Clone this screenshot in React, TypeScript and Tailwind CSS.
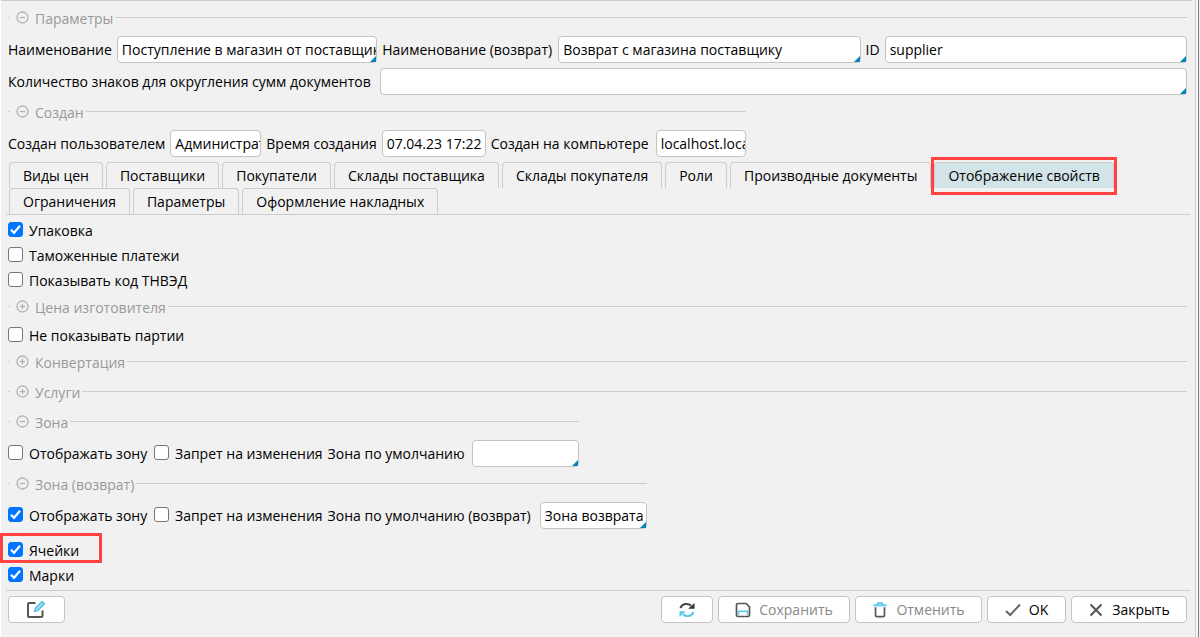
import { useState, type ReactNode } from "react";

type FieldProps = {
  id: string;
  label: string;
  value?: string;
  marked?: boolean;
  labelWidth?: string;
  width: string;
};

function Field({ id, label, value = "", marked = false, labelWidth = "", width }: FieldProps) {
  const [text, setText] = useState(value);
  return (
    <>
      <label htmlFor={id} className={`shrink-0 whitespace-nowrap ${labelWidth}`}>
        {label}
      </label>
      <span className={`relative block min-w-0 ${width}`}>
        <input
          id={id}
          value={text}
          onChange={(e) => setText(e.target.value)}
          className="block h-[27px] w-full rounded border border-[#c3c3c3] bg-white pl-1 outline-none focus:border-[#0085be]"
        />
        {marked && (
          <svg viewBox="0 0 6 6" className="pointer-events-none absolute right-px bottom-px size-1.5" aria-hidden="true">
            <path d="M6 0V6H0Z" fill="#0085be" />
          </svg>
        )}
      </span>
    </>
  );
}

function Check({ label, checked = false, labelWidth = "" }: { label: string; checked?: boolean; labelWidth?: string }) {
  const [on, setOn] = useState(checked);
  return (
    <label className="flex h-[25px] items-center gap-1.5 whitespace-nowrap">
      <span className="mt-1 grid size-[15px] shrink-0 self-start">
        <input
          type="checkbox"
          checked={on}
          onChange={() => setOn(!on)}
          className="col-start-1 row-start-1 size-[15px] appearance-none rounded-[3px] border border-[#767676] bg-white checked:border-[#0075ff] checked:bg-[#0075ff]"
        />
        {on && (
          <svg viewBox="0 0 15 15" className="pointer-events-none col-start-1 row-start-1 size-[15px]" aria-hidden="true">
            <path d="M3 7.8L6 10.8L12 3.8" fill="none" stroke="#fff" strokeWidth="2.2" />
          </svg>
        )}
      </span>
      <span className={labelWidth}>{label}</span>
    </label>
  );
}

function Group({ title, open = true }: { title: string; open?: boolean }) {
  return (
    <div className="flex h-[23px] items-center text-[#999]">
      <span className="h-px w-0.5 bg-[#ccc]" />
      <button type="button" className="ml-1.5 flex items-center gap-1.5 whitespace-nowrap">
        <svg viewBox="0 0 13 13" className="size-[13px]" fill="none" stroke="#b3b3b3" strokeWidth="1.3" aria-hidden="true">
          <circle cx="6.5" cy="6.5" r="5.5" />
          <path d="M3.8 6.5H9.2" />
          {!open && <path d="M6.5 3.8V9.2" />}
        </svg>
        <span className="pt-0.5">{title}</span>
      </button>
      <span className="ml-0.5 h-px flex-1 bg-[#ccc]" />
    </div>
  );
}

const tabs = [
  "Виды цен",
  "Поставщики",
  "Покупатели",
  "Склады поставщика",
  "Склады покупателя",
  "Роли",
  "Производные документы",
  "Отображение свойств",
  "Ограничения",
  "Параметры",
  "Оформление накладных",
];

function Tabs() {
  const [active, setActive] = useState(7);
  return (
    <div role="tablist" className="-mr-[3px] -ml-0.5 flex flex-wrap gap-x-[3px] border-b border-[#ccc] pl-[3px]">
      {tabs.map((tab, i) => (
        <div key={tab} className="relative h-[26px]">
          <button
            type="button"
            role="tab"
            aria-selected={i === active}
            onClick={() => setActive(i)}
            className={`h-[26px] rounded-t border border-b-0 border-[#ccc] px-[13px] whitespace-nowrap ${i === active ? "bg-[#d3e4e8]" : ""}`}
          >
            {tab}
          </button>
          {i === 7 && <Highlight place="-inset-x-[3px] -top-[5px] -bottom-[7px]" />}
        </div>
      ))}
    </div>
  );
}

function Highlight({ place }: { place: string }) {
  return <span className={`pointer-events-none absolute border-3 border-[#ff4343] ${place}`} />;
}

function Action({ label, title, icon, muted = false, width }: { label?: string; title?: string; icon: ReactNode; muted?: boolean; width: string }) {
  return (
    <button
      type="button"
      aria-label={title}
      className={`flex h-[27px] shrink-0 items-center justify-center gap-2 rounded border border-[#c3c3c3] bg-white whitespace-nowrap ${width} ${muted ? "text-[#888]" : ""}`}
    >
      {icon}
      {label}
    </button>
  );
}

const EditIcon = (
  <svg viewBox="1.5 .5 20 20" className="size-5" fill="none" aria-hidden="true">
    <path d="M10 3.5H3.5Q2.5 3.5 2.5 4.5V16.5Q2.5 17.5 3.5 17.5H15.5Q17 17.5 17 16.5V11" stroke="#555" strokeWidth="2" />
    <path d="M9 12L10 8.5L16.5 2L19 4.3L12.5 11Z" fill="#7fd3f2" stroke="#5cc0e4" strokeWidth="1.4" />
    <path d="M11 10L16.5 4.2" stroke="#c5ecfa" strokeWidth="1" />
  </svg>
);

const RefreshIcon = (
  <svg viewBox="0 0 16 16" className="size-4" aria-hidden="true">
    <path d="M1.4 6C3.5 1.5 8.5 .8 12 3.6" fill="none" stroke="#444" strokeWidth="2" />
    <path d="M15.5 1V6.8H9.2Z" fill="#333" />
    <path d="M14.6 10C12.5 14.5 7.5 15.2 4 12.4" fill="none" stroke="#5cc8f0" strokeWidth="2" />
    <path d="M.5 15V9.2H6.8Z" fill="#5cc8f0" />
  </svg>
);

const SaveIcon = (
  <svg viewBox="0 0 16 16" className="size-4" fill="none" aria-hidden="true">
    <path d="M3 1.5H11.2L14.5 4.8V13Q14.5 14.5 13 14.5H3Q1.5 14.5 1.5 13V3Q1.5 1.5 3 1.5Z" stroke="#555" strokeWidth="1.7" />
    <path d="M3.5 13V9.2H12.5V13" stroke="#5cc8f0" strokeWidth="1.5" />
  </svg>
);

const TrashIcon = (
  <svg viewBox="0 0 16 16" className="size-4" fill="none" aria-hidden="true">
    <path d="M1.2 3.3H14.8M5.7 3V1.2H10.3V3" stroke="#5cc8f0" strokeWidth="1.8" />
    <path d="M3.5 5.2V13.2Q3.5 14.6 5 14.6H11Q12.5 14.6 12.5 13.2V5.2" stroke="#555" strokeWidth="1.7" />
  </svg>
);

const OkIcon = (
  <svg viewBox="0 0 16 16" className="size-4" fill="none" aria-hidden="true">
    <path d="M1 9L5.2 13L15 2.5" stroke="#666" strokeWidth="2" />
  </svg>
);

const CloseIcon = (
  <svg viewBox="0 0 16 16" className="size-4" fill="none" aria-hidden="true">
    <path d="M2.5 2.5L13.5 13.5M13.5 2.5L2.5 13.5" stroke="#555" strokeWidth="2" />
  </svg>
);

export default function App() {
  return (
    <div className="flex min-h-screen border-l border-white bg-[#f1f1f1] font-['Open_Sans','Noto_Sans',sans-serif] text-sm text-black">
      <main className="mr-[3px] flex min-w-0 flex-1 flex-col border-t border-[#ccc] pt-[5px] pr-[5px] pl-[7px]">
        <Group title="Параметры" />
        <div className="mt-[7px] flex items-center gap-[5px]">
          <Field id="name" label="Наименование" value="Поступление в магазин от поставщика" marked width="flex-[260_1_0]" />
          <Field id="return-name" label="Наименование (возврат)" value="Возврат с магазина поставщику" marked labelWidth="min-w-[171px]" width="flex-[302_1_0]" />
          <Field id="code" label="ID" value="supplier" marked width="flex-[302_1_0]" />
        </div>
        <div className="mt-[5px] flex items-center gap-[5px]">
          <Field id="digits" label="Количество знаков для округления сумм документов" marked labelWidth="min-w-[367px]" width="flex-1" />
        </div>

        <section className="mt-[5px] w-fit">
          <Group title="Создан" />
          <div className="mt-[7px] flex items-center gap-[5px]">
            <Field id="author" label="Создан пользователем" value="Администратор" width="w-[91px]" />
            <Field id="created" label="Время создания" value="07.04.23 17:22" width="w-[104px]" />
            <Field id="host" label="Создан на компьютере" value="localhost.localdomain" labelWidth="min-w-[160px]" width="w-[90px]" />
          </div>
        </section>

        <div className="mt-[5px]">
          <Tabs />
        </div>

        <div className="mt-[3px]">
          <Check label="Упаковка" checked />
          <Check label="Таможенные платежи" />
          <Check label="Показывать код ТНВЭД" />
        </div>
        <div className="mt-0.5">
          <Group title="Цена изготовителя" open={false} />
        </div>
        <div className="mt-[5px]">
          <Check label="Не показывать партии" />
        </div>
        <div className="mt-0.5 flex flex-col gap-[7px]">
          <Group title="Конвертация" open={false} />
          <Group title="Услуги" open={false} />
        </div>

        <section className="mt-[7px] w-fit">
          <Group title="Зона" />
          <div className="mt-[7px] flex items-center gap-[5px]">
            <Check label="Отображать зону" labelWidth="min-w-[120px]" />
            <Check label="Запрет на изменения" />
            <Field id="zone" label="Зона по умолчанию" marked labelWidth="min-w-[139px]" width="w-[107px]" />
          </div>
        </section>
        <section className="mt-[5px] w-fit">
          <Group title="Зона (возврат)" />
          <div className="mt-[7px] flex items-center gap-[5px]">
            <Check label="Отображать зону" checked labelWidth="min-w-[120px]" />
            <Check label="Запрет на изменения" />
            <Field id="return-zone" label="Зона по умолчанию (возврат)" value="Зона возврата" marked labelWidth="min-w-[207px]" width="w-[107px]" />
          </div>
        </section>

        <div className="mt-[9px]">
          <div className="relative w-fit">
            <Check label="Ячейки" checked />
            <Highlight place="-top-[5px] -right-[23px] bottom-0 -left-2" />
          </div>
          <Check label="Марки" checked />
        </div>

        <footer className="mt-0.5 -mr-[3px] -ml-0.5 flex gap-[5px] border-t border-[#ccc] pt-[5px] pr-[3px] pb-3.5 pl-0.5">
          <Action title="Редактировать" icon={EditIcon} width="mr-auto w-[57px]" />
          <Action title="Обновить" icon={RefreshIcon} width="w-[52px]" />
          <Action label="Сохранить" icon={SaveIcon} muted width="w-[132px]" />
          <Action label="Отменить" icon={TrashIcon} muted width="w-[127px]" />
          <Action label="OK" icon={OkIcon} width="w-[79px]" />
          <Action label="Закрыть" icon={CloseIcon} width="w-[116px]" />
        </footer>
      </main>
      <div className="mr-px w-1 shrink-0 border-x border-l-[#ccc] border-r-[#777] bg-[#f8f8f8]" />
    </div>
  );
}
